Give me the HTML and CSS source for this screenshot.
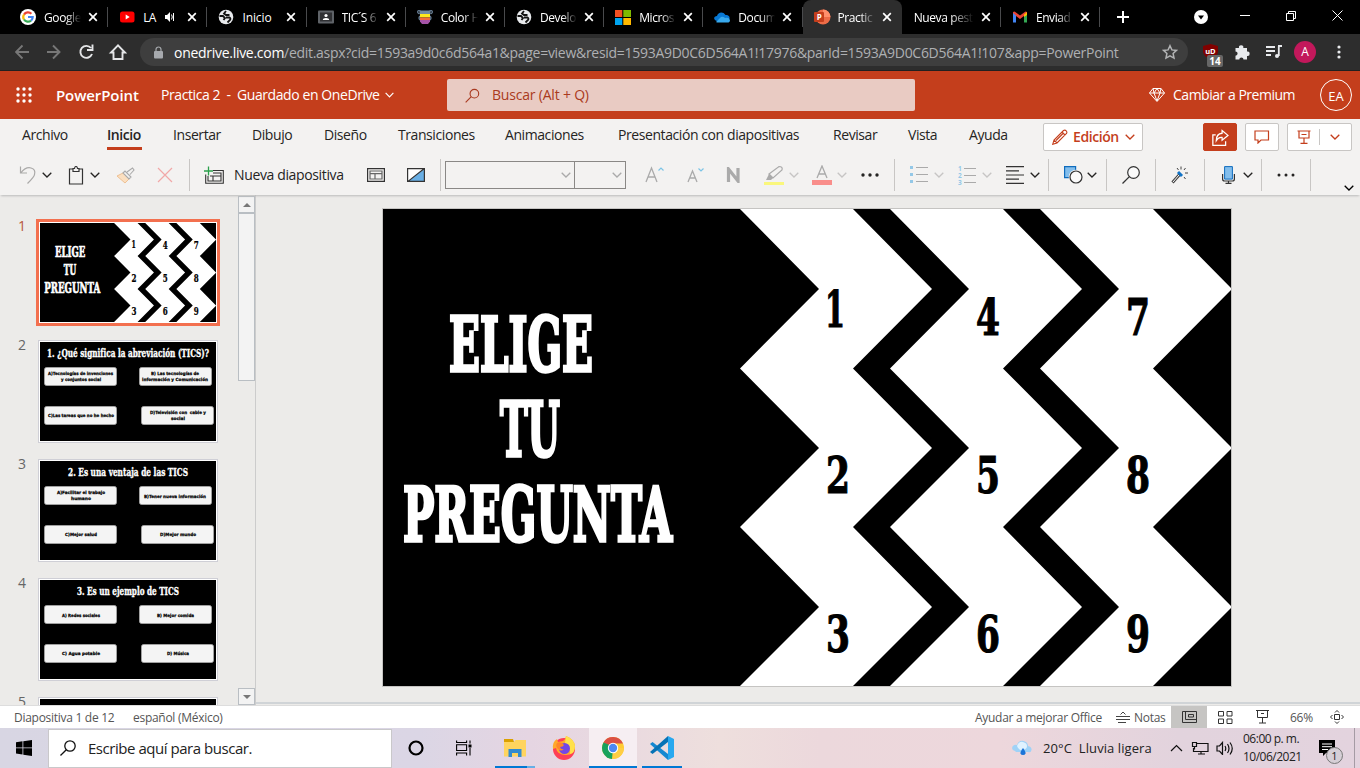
FILE: index.html
```html
<!DOCTYPE html>
<html lang="es">
<head>
<meta charset="utf-8">
<title>Practica 2 - PowerPoint</title>
<link rel="stylesheet" href="styles.css">
</head>
<body>
<svg class="defs" width="0" height="0">
  <symbol id="close" viewBox="0 0 10 10"><path d="M1.2 1.2l7.6 7.6M8.8 1.2L1.2 8.8" stroke="#fff" stroke-width="1.7"/></symbol>
  <symbol id="chev" viewBox="0 0 10 6"><path d="M.7.7L5 5 9.3.7" fill="none" stroke="currentColor" stroke-width="1.3"/></symbol>
  <symbol id="globe" viewBox="0 0 16 16"><circle cx="8" cy="8" r="7.3" fill="#e8eaed"/><path d="M1.500 7h3.500l2 2-1.500 2M8 2L6 4.500l2 1.500h3.500M8 8.500h3.500q1.500 1 .5 2.500l-2.500 2.500" fill="none" stroke="#111" stroke-width="1.800"/></symbol>
</svg>
<div class="screen">
  <header class="tabs">
    <div class="tab"><svg class="fav" viewBox="0 0 16 16"><circle cx="8" cy="8" r="8" fill="#fff"/><g fill="none" stroke-width="2.200"><path d="M4 5.600A4.700 4.700 0 0 1 11.400 4.700" stroke="#ea4335"/><path d="M4 5.500a4.700 4.700 0 0 0 0 5" stroke="#fbbc05"/><path d="M4 10.500a4.700 4.700 0 0 0 7 1.100" stroke="#34a853"/><path d="M8 8h4.700a4.700 4.700 0 0 1-1.600 3.600" stroke="#4285f4"/></g></svg><span class="title">Google</span><svg class="x"><use href="#close"/></svg></div>
    <div class="tab"><svg class="fav" viewBox="0 0 16 16"><rect x="1" y="2.500" width="14.500" height="11" rx="2.500" fill="#f00"/><path d="M6.700 5.500v5l4-2.500z" fill="#fff"/></svg><span class="title short">LA</span><svg class="sound" viewBox="0 0 10 10"><path d="M0 3h2l3-3v10L2 7H0z" fill="#fff"/><path d="M6.500 2.500q1.500 2.500 0 5M8.500 1v8" stroke="#fff" fill="none"/></svg><svg class="x"><use href="#close"/></svg></div>
    <div class="tab"><svg class="fav"><use href="#globe"/></svg><span class="title nofade">Inicio</span><svg class="x"><use href="#close"/></svg></div>
    <div class="tab"><svg class="fav" viewBox="0 0 16 16"><rect y="1.500" width="16" height="13" rx="1" fill="#5f6368"/><rect x="2" y="3.500" width="12" height="9" fill="#303134"/><circle cx="8" cy="6.500" r="1.600" fill="#fff"/><path d="M4.800 11q0-2 3.200-2t3.200 2z" fill="#fff"/></svg><span class="title">TIC´S 6</span><svg class="x"><use href="#close"/></svg></div>
    <div class="tab"><svg class="fav" viewBox="0 0 16 16"><path d="M2.500 5C-1 3 1 .5 3.500 2M13.500 5C17 3 15 .5 12.500 2M3 11q-2-2 0-4M13 11q2-2 0-4" fill="none" stroke="#667c92" stroke-width="1.200"/><path d="M2.500 1.500h11v3.500h-11z" fill="#738ba0"/><path d="M3 5h10v3.500H3z" fill="#ffe81c"/><path d="M3 8.500h10V11H3z" fill="#f36b3c"/><path d="M3 11h10v1.500L11 15H5l-2-2.500z" fill="#a553a7"/></svg><span class="title">Color H</span><svg class="x"><use href="#close"/></svg></div>
    <div class="tab"><svg class="fav"><use href="#globe"/></svg><span class="title">Develo</span><svg class="x"><use href="#close"/></svg></div>
    <div class="tab"><svg class="fav" viewBox="0 0 16 16"><path fill="#f25022" d="M0 1h7.300v7H0z"/><path fill="#7fba00" d="M8.300 1H16v7H8.300z"/><path fill="#00a4ef" d="M0 9h7.300v7H0z"/><path fill="#ffb900" d="M8.300 9H16v7H8.300z"/></svg><span class="title">Micros</span><svg class="x"><use href="#close"/></svg></div>
    <div class="tab"><svg class="fav" viewBox="0 0 16 16"><path d="M3 12C-1 11-.5 7 3 7c1-4 6-5 8.500-1C15 6 16 8 15.500 10z" fill="#0878d4"/><path d="M2 13l5-5q2-1 4 1 4-1 5 2c0 2-1 2.500-2.500 2.500H3z" fill="#38a9ed"/></svg><span class="title">Docum</span><svg class="x"><use href="#close"/></svg></div>
    <div class="tab active"><svg class="fav" viewBox="0 0 16 16"><circle cx="9" cy="8" r="7.500" fill="#ed6c47"/><path d="M9 .5A7.500 7.500 0 0 1 16.500 8H9z" fill="#ff8f6b"/><rect y="3" width="10" height="10" rx="1" fill="#c43e1c"/><text x="2.700" y="11" font-size="8" font-weight="700" fill="#fff">P</text></svg><span class="title">Practic</span><svg class="x"><use href="#close"/></svg></div>
    <div class="tab noicon"><span class="title">Nueva pest</span><svg class="x"><use href="#close"/></svg></div>
    <div class="tab"><svg class="fav" viewBox="0 0 16 16"><path d="M1 3v10h3V7l4 3 4-3v6h3V3l-1.500-.5L8 6.500l-5.500-4z" fill="#ea4335"/><path d="M1 4v9.500h3V6.500z" fill="#4285f4"/><path d="M15 4v9.500h-3V6.500z" fill="#34a853"/><path d="M12 5.500L15 3v3l-3 2z" fill="#fbbc04"/></svg><span class="title">Enviad</span><svg class="x"><use href="#close"/></svg></div>
    <svg class="plus" viewBox="0 0 12 12"><path d="M6 0v12M0 6h12" stroke="#fff" stroke-width="2"/></svg>
    <svg class="tabsearch" viewBox="0 0 14 14"><circle cx="7" cy="7" r="7" fill="#fff"/><path d="M4 5.500h6L7 9.500z"/></svg>
    <svg class="winbtns" viewBox="0 0 104 14" fill="none" stroke="#fff"><path d="M0 7.500h10M46.500 5.500h7v7h-7zM48.500 5.500v-2h7v7h-2M92.500 2.500l10 10M102.500 2.500l-10 10"/></svg>
  </header>

  <div class="toolbar">
    <svg class="nav" viewBox="0 0 112 18" fill="none" stroke-width="1.900"><path d="M14 9H1.500M7.500 2.500L1 9l6.500 6.500M32 9h12.500M38 2.500L44.500 9 38 15.500" stroke="#777"/><path d="M76 5a6 6 0 1 0 1 6M77.500 1.500V7H72" stroke="#e4e5e7"/><path d="M96 9.500h2.500V16h9V9.500h2.500L103 2.300z" stroke="#e4e5e7"/></svg>
    <div class="omni">
      <svg class="lock" viewBox="0 0 10 13"><rect y="5" width="9" height="7.500" rx="1" fill="#a6a9ad"/><path d="M2 5V3.500a2.500 2.500 0 0 1 5 0V5" fill="none" stroke="#a6a9ad" stroke-width="1.200"/></svg>
      <span class="url"><b>onedrive.live.com</b>/edit.aspx?cid=1593a9d0c6d564a1&amp;page=view&amp;resid=1593A9D0C6D564A1!17976&amp;parId=1593A9D0C6D564A1!107&amp;app=PowerPoint</span>
      <svg class="star" viewBox="0 0 16 16"><path d="M8 1.700l1.900 4.200 4.600.5-3.400 3.100.9 4.600L8 11.800l-4 2.300.9-4.600L1.500 6.400l4.600-.5z" fill="none" stroke="#b2b3b4" stroke-width="1.500"/></svg>
    </div>
    <div class="ublock"><svg viewBox="0 0 15 15" width="15" height="15"><path d="M7.500 0L15 2v6q-1 5-7.500 7Q1 13 0 8V2z" fill="#800000"/><text x="2.200" y="9.500" font-size="7.500" font-weight="700" fill="#fff">uD</text></svg><span class="badge">14</span></div>
    <svg class="ext" viewBox="0 0 16 16"><path d="M1.500 4H5a2.200 2.200 0 1 1 4.300 0H13v3.600a2.200 2.200 0 1 1 0 4.300V15.500H9.500a2.100 2.100 0 0 0-4.200 0H1.500v-3.800a2.100 2.100 0 0 0 0-4.200z" fill="#e8eaed"/></svg>
    <svg class="media" viewBox="0 0 16 14"><path d="M0 2h9M0 6h9M0 10h5M12 1h4M12.800 1v10" stroke="#e8eaed" stroke-width="1.800" fill="none"/><circle cx="11" cy="11" r="2" fill="#e8eaed"/></svg>
    <span class="avatar">A</span>
    <svg class="kebab" viewBox="0 0 4 14"><g fill="#e8eaed"><circle cx="2" cy="2" r="1.600"/><circle cx="2" cy="7" r="1.600"/><circle cx="2" cy="12" r="1.600"/></g></svg>
  </div>

  <div class="redbar">
    <svg class="waffle" viewBox="0 0 16 16" fill="#fff"><circle cx="2" cy="2" r="1.700"/><circle cx="8" cy="2" r="1.700"/><circle cx="14" cy="2" r="1.700"/><circle cx="2" cy="8" r="1.700"/><circle cx="8" cy="8" r="1.700"/><circle cx="14" cy="8" r="1.700"/><circle cx="2" cy="14" r="1.700"/><circle cx="8" cy="14" r="1.700"/><circle cx="14" cy="14" r="1.700"/></svg>
    <span class="app">PowerPoint</span>
    <span class="doc">Practica 2 &nbsp;- &nbsp;Guardado en OneDrive</span>
    <svg class="docchev"><use href="#chev"/></svg>
    <div class="search"><svg viewBox="0 0 16 16" width="15" height="15"><circle cx="10" cy="6" r="4.600" fill="none" stroke="#a93a20" stroke-width="1.200"/><path d="M6.700 9.300L.7 15.300" stroke="#a93a20" stroke-width="1.200"/></svg><span>Buscar (Alt + Q)</span></div>
    <svg class="gem" viewBox="0 0 16 16" fill="none" stroke="#fff"><path d="M4 1.500h8L15.500 6 8 14.500.5 6zM.5 6h15M5 6l3 8 3-8M5 6l3-4.500L11 6M4 1.500L5 6M12 1.500L11 6"/></svg>
    <span class="premium">Cambiar a Premium</span>
    <span class="user">EA</span>
  </div>

  <nav class="menu">
    <span>Archivo</span><span class="sel"><b>Inicio</b></span><span>Insertar</span><span>Dibujo</span><span>Diseño</span><span>Transiciones</span><span>Animaciones</span><span>Presentación con diapositivas</span><span>Revisar</span><span>Vista</span><span>Ayuda</span>
    <div class="btn edit"><svg viewBox="0 0 16 16" width="16" height="16" fill="none" stroke="#c43e1c" stroke-width="1.100"><path d="M.7 15.300L2 11 11.500 1.500q1.500-1 2.700.3t.3 2.700L5 14zM10 3l3 3M2 11l3 3M4 11.500L11 4.500"/></svg><b>Edición</b><svg class="c"><use href="#chev"/></svg></div>
    <div class="btn share"><svg viewBox="0 0 16 16" width="17" height="17" fill="none" stroke="#fff" stroke-width="1.200"><path d="M3.500 5.500H.8v10h12v-4M9.500 1.500L15 6l-5.500 4.500V8Q6 7.500 4 11 4 4.500 9.500 4z"/></svg></div>
    <div class="btn comment"><svg viewBox="0 0 16 14" width="16" height="14" fill="none" stroke="#c43e1c" stroke-width="1.200"><path d="M1 1h13.500v9H7l-3 3v-3H1z"/></svg></div>
    <div class="btn present"><svg viewBox="0 0 14 14" width="14" height="14" fill="none" stroke="#c43e1c" stroke-width="1.200"><path d="M.5 1h13M2 1v7h10V1M7 8v5M3.500 13.300h7M4.500 4.500h5"/></svg><i></i><svg class="c"><use href="#chev"/></svg></div>
  </nav>

  <div class="ribbon">
    <div class="slot s24"><svg viewBox="0 0 19 20" width="19" height="20" fill="none" stroke="#aaa9a8" stroke-width="1.200"><path d="M2.500 1.500v6.500H9M2.800 7.800Q8 1.500 13 3t3.500 6.500q0 2-7 9"/></svg></div>
    <div class="slot s26"><svg class="c"><use href="#chev"/></svg></div>
    <div class="slot s22"><svg viewBox="0 0 16 19" width="16" height="19" fill="none" stroke="#333" stroke-width="1.200"><path d="M5 3H1.500v15h13V3H11M5 5.500v-3h1.500q.3-2 1.500-2t1.500 2H11v3z"/></svg></div>
    <div class="slot s26"><svg class="c"><use href="#chev"/></svg></div>
    <div class="slot s41"><svg viewBox="0 0 19 17" width="19" height="17" fill="none"><path d="M1 9l6-3 6 6-4 4z" fill="#fbdfc0" stroke="#eec194"/><path d="M7 6l2-2 6 6-2 2zM11 5l5.500-4L18 3l-4 4.500" stroke="#aaa" stroke-width="1.100"/></svg></div>
    <div class="slot s32"><svg viewBox="0 0 16 16" width="16" height="16"><path d="M1 1l14 14M15 1L1 15" stroke="#f1a8a8" stroke-width="1.200"/></svg></div>
    <i class="sep s15"></i>
    <div class="slot s30"><svg viewBox="0 0 20 19" width="20" height="19" fill="none"><path d="M9 4.500h10.300v12.800H1.700V8.500M4 10v5h13V7H9M6 10h11M9 10v5" stroke="#333" stroke-width="1.100"/><path d="M4.500.5v9M0 5h9" stroke="#2ba04b" stroke-width="1.300"/></svg></div>
    <div class="slot s133"><span class="new">Nueva diapositiva</span></div>
    <div class="slot s40"><svg viewBox="0 0 18 14" width="18" height="14" fill="none" stroke="#333" stroke-width="1.200"><path d="M.6.6h16.800v12.800H.6z"/><path d="M3 3h12v8H3zM3 5.700h12M8 5.700V11" stroke="#666"/></svg></div>
    <div class="slot s33"><svg viewBox="0 0 18 14" width="18" height="14"><path d="M.6.6h16.800v12.800H.6z" fill="#fff"/><path d="M1.500 13L17 1v12z" fill="#69afe5"/><path d="M.6.6h16.800v12.800H.6zM1 13.400L17 .8" fill="none" stroke="#333" stroke-width="1.200"/></svg></div>
    <i class="sep s5"></i>
    <div class="combo font"><svg class="c"><use href="#chev"/></svg></div><div class="combo size"><svg class="c"><use href="#chev"/></svg></div>
    <div class="slot s42"><svg viewBox="0 0 20 18" width="20" height="18" fill="none"><path d="M1 16L6.500 2 12 16M3 11h7" stroke="#aaa" stroke-width="1.300"/><path d="M13.500 4.500l2.500-2.500 2.500 2.500" stroke="#7cc4e6" stroke-width="1.200"/></svg></div>
    <div class="slot s39"><svg viewBox="0 0 18 18" width="18" height="18" fill="none"><path d="M1 16L5.500 5 10 16M3 12h5" stroke="#aaa" stroke-width="1.300"/><path d="M11.500 2.500L14 5l2.500-2.500" stroke="#7cc4e6" stroke-width="1.200"/></svg></div>
    <div class="slot s38"><svg viewBox="0 0 15 16" width="15" height="16"><path d="M2.500 15V2l9.500 12V1" stroke="#aaa" stroke-width="3.200" fill="none"/></svg></div>
    <div class="slot s25"><svg viewBox="0 0 20 20" width="20" height="20" fill="none"><path d="M0 17h20v3H0z" fill="#faf77c"/><path d="M2 15l3-6 4 4-2 2z" fill="#aaa"/><path d="M5 9l10-7.500q4 0 3 3.500L9 13z" stroke="#aaa" stroke-width="1.200"/></svg></div>
    <div class="slot s23 dim"><svg class="c"><use href="#chev"/></svg></div>
    <div class="slot s25"><svg viewBox="0 0 20 20" width="20" height="20" fill="none"><path d="M0 15h20v5H0z" fill="#f98e8b"/><path d="M5 13l5-12 5 12M7 9h6" stroke="#aaa" stroke-width="1.300"/></svg></div>
    <div class="slot s24 dim"><svg class="c"><use href="#chev"/></svg></div>
    <div class="slot s33"><svg class="dots"><circle cx="2" cy="2" r="1.700"/><circle cx="9" cy="2" r="1.700"/><circle cx="16" cy="2" r="1.700"/></svg></div>
    <i class="sep s16"></i>
    <div class="slot s24"><svg viewBox="0 0 18 18" width="18" height="18"><path d="M6 1.500h12M6 8.500h12M6 15.500h12" stroke="#aaa"/><path d="M0 0h3v3H0zM0 7h3v3H0zM0 14h3v3H0z" fill="#94c8e7"/></svg></div>
    <div class="slot s24 dim"><svg class="c"><use href="#chev"/></svg></div>
    <div class="slot s24"><svg viewBox="0 0 18 19" width="18" height="19"><path d="M6 2.500h12M6 9.500h12M6 16.500h12" stroke="#aaa"/><g class="nums"><text x="0" y="5">1</text><text x="0" y="12">2</text><text x="0" y="19">3</text></g></svg></div>
    <div class="slot s24 dim"><svg class="c"><use href="#chev"/></svg></div>
    <div class="slot s24"><svg viewBox="0 0 18 18" width="18" height="18"><path d="M0 .6h18M0 4.800h13M0 9h18M0 13.200h13M0 17.400h18" stroke="#333" stroke-width="1.200"/></svg></div>
    <div class="slot s18"><svg class="c"><use href="#chev"/></svg></div>
    <i class="sep s16"></i>
    <div class="slot s23"><svg viewBox="0 0 19 18" width="19" height="18"><path d="M.6.6h11v11H.6z" fill="#83beec" stroke="#0f6cbd" stroke-width="1.200"/><circle cx="12" cy="11" r="7.300" fill="#f3f2f1"/><circle cx="12" cy="11" r="6" fill="#fafafa" stroke="#333" stroke-width="1.200"/></svg></div>
    <div class="slot s19"><svg class="c"><use href="#chev"/></svg></div>
    <i class="sep s16"></i>
    <div class="slot s33"><svg viewBox="0 0 18 18" width="18" height="18"><circle cx="11.500" cy="6.500" r="5.800" fill="#fafafa" stroke="#333" stroke-width="1.200"/><path d="M7.400 10.600L.5 17.500" stroke="#333" stroke-width="1.300"/></svg></div>
    <i class="sep s16"></i>
    <div class="slot s33"><svg viewBox="0 0 17 18" width="17" height="18" fill="none"><path d="M1.500 16.500L9 8" stroke="#444" stroke-width="3"/><path d="M2 16L8 9" stroke="#fff"/><path d="M7 6l4 4" stroke="#1173c6" stroke-width="3"/><path d="M10 .5v3M6 2l1.500 2M14.500 2L13 4M14 7h3M13 11l1.500 2" stroke="#444"/></svg></div>
    <i class="sep s18"></i>
    <div class="slot s21"><svg viewBox="0 0 13 18" width="13" height="18" fill="none"><path d="M.6 8v5q0 2 2 2h7.800q2 0 2-2V8M6.500 15v2.500M3.500 17.400h6" stroke="#333" stroke-width="1.200"/><path d="M2.600.6h7.800v12.500H2.600z" fill="#83beec" stroke="#0f6cbd"/></svg></div>
    <div class="slot s18"><svg class="c"><use href="#chev"/></svg></div>
    <i class="sep s16"></i>
    <div class="slot s33"><svg class="dots"><circle cx="2" cy="2" r="1.500"/><circle cx="9" cy="2" r="1.500"/><circle cx="16" cy="2" r="1.500"/></svg></div>
    <i class="sep s34"></i>
    <div class="slot low"><svg class="c"><use href="#chev"/></svg></div>
  </div>

  <main class="work">
    <aside class="panel">
      <div class="item current"><span class="n">1</span><div class="frame"><svg viewBox="0 0 848 477" preserveAspectRatio="none"><path d="M0 0h848v477H0z"/><g fill="#fff"><path id="zig" d="M357 0h113l79 80-79 79.500 79 79.500-79 79 79 80-79 79H357l79-79-79-80 79-79-79-79.500 79-79.500z"/><use href="#zig" x="150"/><use href="#zig" x="300"/></g>
        <g class="slab" fill="#fff" stroke="#fff"><text x="72" y="166" textLength="146" lengthAdjust="spacingAndGlyphs">ELIGE</text><text x="115" y="250" textLength="60" lengthAdjust="spacingAndGlyphs">TU</text><text x="20" y="335" textLength="270" lengthAdjust="spacingAndGlyphs">PREGUNTA</text></g>
        <g class="slab num"><text x="441" y="119" textLength="21" lengthAdjust="spacingAndGlyphs">1</text><text x="441" y="285" textLength="24" lengthAdjust="spacingAndGlyphs">2</text><text x="441" y="444" textLength="24" lengthAdjust="spacingAndGlyphs">3</text><text x="591" y="127" textLength="24" lengthAdjust="spacingAndGlyphs">4</text><text x="591" y="285" textLength="24" lengthAdjust="spacingAndGlyphs">5</text><text x="591" y="444" textLength="24" lengthAdjust="spacingAndGlyphs">6</text><text x="741" y="127" textLength="24" lengthAdjust="spacingAndGlyphs">7</text><text x="741" y="285" textLength="24" lengthAdjust="spacingAndGlyphs">8</text><text x="741" y="444" textLength="24" lengthAdjust="spacingAndGlyphs">9</text></g></svg></div></div>
      <div class="item"><span class="n">2</span><div class="frame"><svg viewBox="0 0 176 99"><path d="M0 0h176v99H0z"/><text class="q" x="7" y="15" textLength="162" lengthAdjust="spacingAndGlyphs">1. ¿Qué significa la abreviación (TICS)?</text><g class="box"><rect x="4.500" y="25.500" width="72" height="18" rx="2"/><rect x="99.500" y="25.500" width="72" height="18" rx="2"/><rect x="4.500" y="64.500" width="72" height="18" rx="2"/><rect x="101.500" y="64.500" width="72" height="18" rx="2"/></g><g class="ans"><text x="8" y="33" textLength="65" lengthAdjust="spacingAndGlyphs">A)Tecnologías de invenciones</text><text x="21" y="39" textLength="40" lengthAdjust="spacingAndGlyphs">y conjuntos social</text><text x="111" y="33" textLength="48" lengthAdjust="spacingAndGlyphs">B) Las tecnologías de</text><text x="102" y="39" textLength="66" lengthAdjust="spacingAndGlyphs">información y Comunicación</text><text x="8" y="75" textLength="66" lengthAdjust="spacingAndGlyphs">C)Las tareas que no he hecho</text><text x="110" y="72" textLength="56" lengthAdjust="spacingAndGlyphs" xml:space="preserve">D)Televisión con  cable y</text><text x="131" y="78" textLength="14" lengthAdjust="spacingAndGlyphs">social</text></g></svg></div></div>
      <div class="item"><span class="n">3</span><div class="frame"><svg viewBox="0 0 176 99"><path d="M0 0h176v99H0z"/><text class="q" x="28" y="15" textLength="120" lengthAdjust="spacingAndGlyphs">2. Es una ventaja de las TICS</text><g class="box"><rect x="4.500" y="25.500" width="72" height="18" rx="2"/><rect x="99.500" y="25.500" width="72" height="18" rx="2"/><rect x="4.500" y="64.500" width="72" height="18" rx="2"/><rect x="101.500" y="64.500" width="72" height="18" rx="2"/></g><g class="ans"><text x="17" y="33" textLength="48" lengthAdjust="spacingAndGlyphs">A)Facilitar el trabajo</text><text x="31" y="39" textLength="20" lengthAdjust="spacingAndGlyphs">humano</text><text x="104" y="37" textLength="62" lengthAdjust="spacingAndGlyphs">B)Tener nueva información</text><text x="25" y="75" textLength="32" lengthAdjust="spacingAndGlyphs">C)Mejor salud</text><text x="120" y="75" textLength="36" lengthAdjust="spacingAndGlyphs">D)Mejor mundo</text></g></svg></div></div>
      <div class="item"><span class="n">4</span><div class="frame"><svg viewBox="0 0 176 99"><path d="M0 0h176v99H0z"/><text class="q" x="37" y="15" textLength="102" lengthAdjust="spacingAndGlyphs">3. Es un ejemplo de TICS</text><g class="box"><rect x="4.500" y="25.500" width="72" height="18" rx="2"/><rect x="99.500" y="25.500" width="72" height="18" rx="2"/><rect x="4.500" y="64.500" width="72" height="18" rx="2"/><rect x="101.500" y="64.500" width="72" height="18" rx="2"/></g><g class="ans"><text x="22" y="37" textLength="38" lengthAdjust="spacingAndGlyphs">A) Redes sociales</text><text x="117" y="37" textLength="37" lengthAdjust="spacingAndGlyphs">B) Mejor comida</text><text x="22" y="75" textLength="38" lengthAdjust="spacingAndGlyphs">C) Agua potable</text><text x="127" y="75" textLength="22" lengthAdjust="spacingAndGlyphs">D) Música</text></g></svg></div></div>
      <div class="item"><span class="n">5</span><div class="frame"><svg viewBox="0 0 176 99"><path d="M0 0h176v99H0z"/></svg></div></div>
    </aside>
    <div class="scroll"><i class="sb up"></i><i class="grip"></i><i class="sb down"></i></div>
    <section class="stage">
      <svg class="slide" viewBox="0 0 848 477"><path d="M0 0h848v477H0z"/><g fill="#fff"><use href="#zig"/><use href="#zig" x="150"/><use href="#zig" x="300"/></g>
        <g class="slab" fill="#fff" stroke="#fff"><text x="66" y="162" textLength="144" lengthAdjust="spacingAndGlyphs">ELIGE</text><text x="117" y="247" textLength="60" lengthAdjust="spacingAndGlyphs">TU</text><text x="20" y="332" textLength="269" lengthAdjust="spacingAndGlyphs">PREGUNTA</text></g>
        <g class="slab num"><text x="442" y="118" textLength="20" lengthAdjust="spacingAndGlyphs">1</text><text x="443" y="284" textLength="24" lengthAdjust="spacingAndGlyphs">2</text><text x="443" y="443" textLength="24" lengthAdjust="spacingAndGlyphs">3</text><text x="593" y="126" textLength="24" lengthAdjust="spacingAndGlyphs">4</text><text x="593" y="284" textLength="24" lengthAdjust="spacingAndGlyphs">5</text><text x="593" y="443" textLength="24" lengthAdjust="spacingAndGlyphs">6</text><text x="743" y="126" textLength="24" lengthAdjust="spacingAndGlyphs">7</text><text x="743" y="284" textLength="24" lengthAdjust="spacingAndGlyphs">8</text><text x="743" y="443" textLength="24" lengthAdjust="spacingAndGlyphs">9</text></g></svg>
    </section>
  </main>

  <footer class="status">
    <span class="count">Diapositiva 1 de 12</span><span class="lang">español (México)</span>
    <span class="help">Ayudar a mejorar Office</span>
    <svg class="noteicon" viewBox="0 0 14 12" fill="none" stroke="#444"><path d="M0 5.500h14M0 8.500h14M2 11.500h8M4.500 3.500L7 1l2.500 2.500"/></svg><span class="notes">Notas</span>
    <span class="view on"><svg viewBox="0 0 15 12" width="15" height="12" fill="none" stroke="#333"><path d="M.5.5h14v11H.5zM3.500.5v8h11M6.500 3.500h5v2.500h-5z"/></svg></span>
    <span class="view"><svg viewBox="0 0 15 13" width="15" height="13" fill="none" stroke="#333"><path d="M.5.500h5v4.500h-5zM9 .500h5v4.500H9zM.5 8h5v4.500h-5zM9 8h5v4.500H9z"/></svg></span>
    <span class="view"><svg viewBox="0 0 13 14" width="13" height="14" fill="none" stroke="#333"><path d="M0 .500h13M1.500.500v7h10v-7M6.500 7.500v5.500M3 13h7M5 3.500h3"/></svg></span>
    <span class="pct">66%</span>
    <svg class="fit" viewBox="0 0 14 14" fill="none" stroke="#333"><path d="M4.500 4.500h5v5h-5zM5 2.500l2-2 2 2M5 11.500l2 2 2-2M2.500 5l-2 2 2 2M11.500 5l2 2-2 2"/></svg>
  </footer>

  <div class="taskbar">
    <svg class="win" viewBox="0 0 16 16"><path d="M0 2.200L6.500 1.300v6.200H0zM7.300 1.200L16 0v7.500H7.300zM0 8.300h6.500v6.200L0 13.600zM7.300 8.300H16V16l-8.700-1.300z"/></svg>
    <div class="find"><svg viewBox="0 0 16 16" width="16" height="16"><circle cx="10" cy="6" r="5.200" fill="none" stroke="#111" stroke-width="1.300"/><path d="M6.300 9.700L.5 15.500" stroke="#111" stroke-width="1.300"/></svg><span>Escribe aquí para buscar.</span></div>
    <svg class="cortana" viewBox="0 0 16 16"><circle cx="8" cy="8" r="6.500" fill="none" stroke="#000" stroke-width="2.200"/></svg>
    <svg class="tview" viewBox="0 0 16 16" fill="none" stroke="#000" stroke-width="1.100"><path d="M.6.500v2h10v-2M.6 4.800h10v5.700H.6zM.6 15.500v-2.500h10v2.500M14 .500v3M14 8v7.500"/><path d="M12.500 4.500h3v3h-3z" fill="#000" stroke="none"/></svg>
    <div class="app1 files"><svg viewBox="0 0 22 19" width="22" height="19"><path d="M0 0h9l1 3H0z" fill="#dba100"/><path d="M0 3h10l1.500-2H22v16.500H0z" fill="#ffd45e"/><path d="M4.500 10h13v8h-3.500v-4H8v4H4.500z" fill="#338bd0"/></svg></div>
    <div class="app1 fire"><svg viewBox="0 0 24 24" width="24" height="24"><circle cx="12" cy="13" r="11" fill="#fe3f55"/><path d="M1 13Q0 6 5 3l1 3 5-1q3-2 3-5 8 3 9 10 0 9-9 9Q5 19 4 12z" fill="#ffa92b"/><path d="M14 0q8 3 9 10 0 7-5 8 1-7-5-11z" fill="#ffe14a"/><circle cx="12.500" cy="12.500" r="5.500" fill="#7446e5"/><path d="M5 7q4-2 7 2-1 2-4 2 1 3 4 2-3 3-6 0T5 7z" fill="#ff862a"/></svg></div>
    <div class="app1 chrome"><svg viewBox="0 0 24 24" width="24" height="24"><circle cx="12" cy="12" r="11" fill="#fc3"/><path d="M12 12H22.800A11 11 0 0 1 11 23z" fill="#ffce44"/><path d="M12 12L11 23A11 11 0 0 1 2.500 6.500z" fill="#17a25d"/><path d="M12 12L2.500 6.500A11 11 0 0 1 22 7.500H12z" fill="#db5044"/><path d="M2.500 6.500L8 14l3-4z" fill="#17a25d"/><circle cx="12" cy="12" r="5.200" fill="#fff"/><circle cx="12" cy="12" r="4.200" fill="#4d89f2"/></svg></div>
    <div class="app1 code"><svg viewBox="0 0 24 24" width="24" height="24"><path d="M18 0l6 3v18l-6 3z" fill="#28a8ef"/><path d="M0 8l2.500-2L18 18v6z" fill="#1488d1"/><path d="M0 16l2.500 2L18 6V0z" fill="#0672b5"/></svg></div>
    <svg class="cloud" viewBox="0 0 20 16"><path d="M3 11Q-1 10 .5 6.500 2 4 5 5 7 0 11.500 1T16 6q4 1 3.500 4T16 12H4z" fill="#9fd2f7"/><path d="M5 6q2-5 6-4t4 4-4 4-6-4z" fill="#e0f2ff"/><path d="M11 8q-3 4-2.500 5.500t2.500 1.500 2.500-1.500T11 8z" fill="#1d75d8"/></svg>
    <span class="weather">20°C &nbsp;Lluvia ligera</span>
    <svg class="tray" viewBox="0 0 63 14" fill="none" stroke="#111" stroke-width="1.200"><path d="M1 10l5.500-5.500L12 10M26 2.500h12v8H23.500V7M28 13h7M31 10.500v2.500M22.500 1.500h4v4h-4zM24.500 5.500v3M47 5h2.500l3-3.500v12L49.500 10H47zM55 5q1.500 2.500 0 5M57.500 3q3 4.500 0 9M60 1.500q4.500 6 0 12"/></svg>
    <div class="clock"><span>06:00 p. m.</span><span>10/06/2021</span></div>
    <div class="note"><svg viewBox="0 0 16 16" width="16" height="16"><path d="M0 0h16v13H7l-3 3v-3H0z"/><path d="M3 4h10M3 6.700h10M3 9.500h6" stroke="#fff"/></svg><span>1</span></div>
    <i class="edge"></i>
  </div>
</div>
</body>
</html>
```

FILE: styles.css
```css
* { box-sizing: border-box; }
body { margin: 0; font-family: "Open Sans", "Noto Sans", sans-serif; }
svg { display: block; flex: none; }
span { white-space: nowrap; }
.defs { position: absolute; }
.screen { width: 1360px; height: 768px; display: flex; flex-direction: column; overflow: hidden; background: #ecebe9; }

/* browser tabs */
.tabs { height: 34px; background: #000; display: flex; align-items: center; padding-left: 9px; flex: none; color: #fff; font-size: 12px; }
.tab { width: 99.200px; height: 34px; padding-left: 11px; display: flex; align-items: center; position: relative; flex: none; }
.tab::after { content: ""; position: absolute; right: 0; top: 7px; width: 1px; height: 20px; background: #494a4c; }
.fav { width: 16px; height: 16px; margin-right: 8px; overflow: visible; }
.title { width: 37px; overflow: hidden; letter-spacing: -.4px; margin-right: 7px; -webkit-mask-image: linear-gradient(90deg, #000 60%, transparent); mask-image: linear-gradient(90deg, #000 60%, transparent); }
.title.nofade { -webkit-mask-image: none; mask-image: none; letter-spacing: -.1px; }
.title.short { width: 15px; margin-right: 7px; letter-spacing: -.6px; -webkit-mask-image: none; mask-image: none; }
.sound { width: 10px; height: 10px; margin-right: 12px; }
.x { width: 10px; height: 10px; }
.tab.active { background: #2d2d2d; border-radius: 8px 8px 0 0; }
.tab.active::after { display: none; }
.noicon { padding-left: 12px; }
.noicon .title { width: 60px; }
.plus { width: 12px; height: 12px; margin-left: 17px; }
.tabsearch { width: 14px; height: 14px; margin-left: 65px; }
.winbtns { width: 104px; height: 14px; margin: -5px 0 0 32px; }

/* address bar */
.toolbar { height: 37px; background: #2d2d2d; border-bottom: 1px solid #202020; display: flex; align-items: center; flex: none; padding-left: 15px; }
.nav { width: 112px; height: 18px; }
.omni { width: 1048px; height: 28px; margin-left: 13px; border-radius: 14px; background: #3e3e3e; display: flex; align-items: center; padding-left: 14px; }
.lock { width: 10px; height: 13px; }
.url { margin-left: 10px; width: 988px; font-size: 14px; letter-spacing: -.286px; color: #aeb0b3; }
.url b { font-weight: 400; color: #fff; }
.star { width: 16px; height: 16px; }
.ublock { width: 15px; height: 17px; margin-left: 15px; position: relative; }
.badge { position: absolute; left: 4px; top: 11px; width: 16px; height: 12px; border-radius: 2px; background: #666; color: #fff; font: 700 10px/12px "Open Sans", sans-serif; text-align: center; }
.ext { width: 16px; height: 16px; margin-left: 16px; }
.media { width: 16px; height: 14px; margin-left: 16px; }
.avatar { width: 22px; height: 22px; margin-left: 12px; border-radius: 50%; background: #c2185b; color: #fff; font-size: 12px; line-height: 22px; text-align: center; }
.kebab { width: 4px; height: 14px; margin-left: 21px; }

/* app header */
.redbar { height: 48px; background: #c43e1c; color: #fff; display: flex; align-items: center; flex: none; padding-left: 16px; font-size: 14px; }
.redbar span { padding-bottom: 1px; }
.waffle { width: 16px; height: 16px; }
.app { width: 105px; margin-left: 24px; font-size: 15px; font-weight: 600; letter-spacing: -.1px; }
.doc { width: 220px; letter-spacing: -.42px; }
.docchev { width: 9px; height: 6px; margin-left: 4px; }
.search { width: 468px; height: 32px; margin-left: 53px; padding-left: 18px; display: flex; align-items: center; gap: 12px; border-radius: 2px; background: #e9cbc3; color: #a93a20; letter-spacing: -.2px; }
.gem { width: 16px; height: 16px; margin-left: 234px; }
.premium { width: 122px; margin-left: 8px; letter-spacing: -.48px; }
.user { width: 32px; height: 32px; margin-left: 25px; border: 1px solid #fff; border-radius: 50%; font-size: 13px; line-height: 32px; text-align: center; }

/* ribbon tabs */
.menu { height: 36px; padding-left: 22px; background: #f3f2f1; display: flex; flex: none; font-size: 14px; line-height: 31px; letter-spacing: -.42px; color: #252423; }
.menu > span { flex: none; width: 85px; }
.menu > span:nth-child(2) { width: 66px; }
.menu > span:nth-child(3) { width: 79px; }
.menu > span:nth-child(4) { width: 72px; }
.menu > span:nth-child(5) { width: 74px; }
.menu > span:nth-child(6) { width: 107px; }
.menu > span:nth-child(7) { width: 113px; }
.menu > span:nth-child(8) { width: 215px; }
.menu > span:nth-child(9) { width: 75px; }
.menu > span:nth-child(10) { width: 61px; }
.menu > span:nth-child(11) { width: 74px; }
.sel b { display: block; width: 35px; height: 31px; border-bottom: 3px solid #c43e1c; font-weight: 600; }
.btn { height: 28px; margin-top: 4px; border: 1px solid #c8c6c4; border-radius: 2px; background: #fff; color: #c43e1c; display: flex; align-items: center; flex: none; }
.btn b { font-weight: 600; line-height: 20px; padding-bottom: 1px; }
.c { width: 10px; height: 6px; }
.edit { width: 100px; padding-left: 8px; }
.edit b { width: 46px; margin: 0 6px 0 5px; }
.share { width: 34px; margin-left: 60px; justify-content: center; background: #c43e1c; border-color: #c43e1c; }
.comment { width: 34px; margin-left: 8px; justify-content: center; }
.present { width: 65px; margin-left: 8px; padding-left: 9px; }
.present i { width: 1px; height: 16px; margin: 0 10px 0 8px; background: #c8c6c4; }

/* ribbon commands */
.ribbon { height: 40px; padding-left: 18px; background: #f3f2f1; display: flex; align-items: center; flex: none; color: #252423; box-shadow: 0 2px 2px -1px #bbb; position: relative; }
.slot { flex: none; display: flex; align-items: center; }
.sep { flex: none; height: 32px; background: linear-gradient(90deg, #c8c6c4 1px, transparent 1px); }
.dim { color: #c6c5c4; }
.new { font-size: 14px; letter-spacing: -.36px; padding-bottom: 1px; }
.s5 { width: 5px; } .s15 { width: 15px; } .s16 { width: 16px; } .s18 { width: 18px; } .s19 { width: 19px; }
.s21 { width: 21px; } .s22 { width: 22px; } .s23 { width: 23px; } .s24 { width: 24px; } .s25 { width: 25px; } .s26 { width: 26px; }
.s30 { width: 30px; } .s32 { width: 32px; } .s33 { width: 33px; } .s34 { width: 34px; } .s38 { width: 38px; } .s39 { width: 39px; }
.s40 { width: 40px; } .s41 { width: 41px; } .s42 { width: 42px; } .s133 { width: 133px; }
.combo { height: 28px; border: 1px solid #8a8886; display: flex; align-items: center; justify-content: flex-end; padding-right: 3px; color: #aaa; flex: none; }
.font { width: 129px; border-right: 0; }
.size { width: 52px; margin-right: 19px; }
.dots { width: 18px; height: 4px; fill: #252423; }
.nums { font-size: 6.500px; font-weight: 700; fill: #94c8e7; }
.low { margin-top: 25px; color: #000; }

/* editor */
.work { height: 511px; display: flex; flex: none; overflow: hidden; border-bottom: 1px solid #ddd; }
.panel { width: 238px; height: 511px; padding: 26px 0 0 18px; overflow: hidden; flex: none; }
.item { height: 119px; display: flex; }
.n { width: 20px; font-size: 14px; line-height: 18px; margin-top: -4px; color: #666; }
.frame { width: 180px; height: 103px; padding: 1px; border: 1px solid #cfcfd6; background: #fff; }
.frame svg { width: 176px; height: 99px; }
.current .frame { box-shadow: 0 0 0 2px #f3704f; border-color: #f3704f; }
.current .n { color: #b8573c; }
.scroll { width: 18px; height: 510px; border-right: 1px solid #ccc; display: flex; flex-direction: column; flex: none; }
.sb { width: 17px; height: 17px; border: 1px solid #b9bec3; background: #f3f3f3; display: flex; align-items: center; justify-content: center; }
.sb::after { content: ""; border: 4px solid transparent; border-top: 0; border-bottom: 4px solid #777; }
.down { margin-top: auto; }
.down::after { border-bottom: 0; border-top: 4px solid #777; }
.up { margin-top: 1px; }
.grip { width: 17px; height: 168px; border: 1px solid #b9bec3; background: #f3f3f3; }
.stage { width: 1104px; height: 509px; padding: 13px 0 0 126px; border-bottom: 2px solid #d0d4d7; flex: none; }
.slide { width: 850px; height: 479px; border: 1px solid #c5c4c2; }
.slab { font: 700 75px "DejaVu Serif", serif; stroke-width: 3.500px; }
.num { font-size: 51px; stroke: #000; stroke-width: 1.200px; }
.q { font: 700 11.500px "DejaVu Serif", serif; fill: #fff; stroke: #fff; stroke-width: .4px; }
.box { fill: #f4f4f4; stroke: #aaa; stroke-width: .8px; }
.ans { font: 700 4.300px "DejaVu Sans", sans-serif; fill: #000; stroke: #000; stroke-width: .25px; }

/* status bar */
.status { height: 22px; background: #fff; display: flex; align-items: center; flex: none; padding-left: 14px; font-size: 12px; letter-spacing: -.28px; color: #555; }
.count { width: 119px; }
.lang { width: 842px; }
.help { width: 141px; }
.noteicon { width: 14px; height: 12px; }
.notes { width: 37px; margin-left: 4px; }
.view { width: 36px; height: 22px; display: flex; align-items: center; justify-content: center; }
.view + .view { width: 37px; }
.on { background: #c6c5c3; }
.pct { width: 27px; margin-left: 9px; }
.fit { width: 14px; height: 14px; margin-left: 13px; }

/* desktop taskbar */
.taskbar { height: 40px; background: linear-gradient(90deg, #d8d6e3 0, #dbd6e5 420px, #e5d5e2 530px, #eedfdd 720px, #ecd8dc 820px, #edd7dc 1000px, #e2d3dd 1180px, #e3d3de); display: flex; align-items: center; flex: none; padding-left: 16px; color: #222; }
.win { width: 16px; height: 16px; }
.find { width: 344px; height: 39px; margin: 1px 0 0 16px; padding: 0 0 2px 11px; border: 1px solid #c9c8ca; background: #fff; display: flex; align-items: center; gap: 12px; font-size: 15px; letter-spacing: -.46px; }
.cortana { width: 16px; height: 16px; margin-left: 16px; }
.tview { width: 16px; height: 16px; margin-left: 32px; }
.app1 { height: 40px; display: flex; align-items: center; justify-content: center; flex: none; }
.files { width: 40px; margin-left: 23px; background: linear-gradient(90deg, #0078d4 32px, #66afe6 32px) bottom / 100% 2px no-repeat; }
.fire { width: 54px; padding-left: 3px; }
.chrome { width: 48px; background: linear-gradient(#0078d4, #0078d4) bottom / 100% 2px no-repeat, #f6eef2; }
.code { width: 40px; margin-left: 5px; background: linear-gradient(#0078d4, #0078d4) bottom / 100% 2px no-repeat; }
.cloud { width: 20px; height: 16px; margin-left: 330px; }
.weather { width: 110px; margin-left: 11px; font-size: 13px; letter-spacing: .08px; }
.tray { width: 63px; height: 14px; margin-left: 17px; }
.clock { width: 58px; margin-left: 10px; display: flex; flex-direction: column; font-size: 12px; line-height: 18px; letter-spacing: -.5px; }
.note { width: 24px; height: 24px; margin: 8px 0 0 18px; position: relative; }
.note span { position: absolute; left: 7px; top: 7px; width: 17px; height: 17px; border: 1px solid #777; border-radius: 50%; background: #d6cfd6; font-size: 11px; line-height: 15px; text-align: center; }
.edge { width: 1px; height: 40px; margin-left: 11px; background: #a59ba4; }
```
